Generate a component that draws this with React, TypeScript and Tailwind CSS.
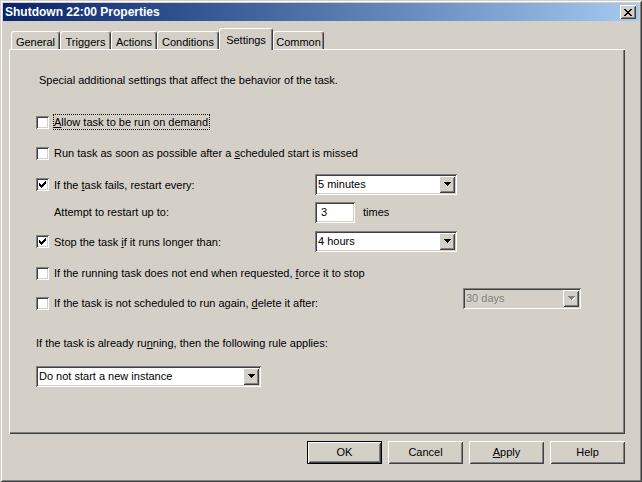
import React from 'react';

const raised =
  'shadow-[inset_1px_1px_0_#ffffff,inset_-1px_-1px_0_#404040,inset_2px_2px_0_#d4d0c8,inset_-2px_-2px_0_#808080]';
const sunken =
  'shadow-[inset_1px_1px_0_#808080,inset_-1px_-1px_0_#ffffff,inset_2px_2px_0_#404040,inset_-2px_-2px_0_#d4d0c8]';

const CheckBox: React.FC<{ checked?: boolean }> = ({ checked }) => (
  <div className={`relative w-[13px] h-[13px] bg-white shrink-0 ${sunken}`}>
    {checked && (
      <svg className="absolute left-0 top-0" width="13" height="13" viewBox="0 0 13 13" shapeRendering="crispEdges">
        <path
          d="M3 5h1v3H3z M4 6h1v3H4z M5 7h1v3H5z M6 6h1v3H6z M7 5h1v3H7z M8 4h1v3H8z M9 3h1v3H9z"
          fill="#000"
        />
      </svg>
    )}
  </div>
);

const Check: React.FC<{ checked?: boolean; focus?: boolean; children: React.ReactNode }> = ({
  checked,
  focus,
  children,
}) => (
  <div className="flex items-center">
    <CheckBox checked={checked} />
    <span
      className={`ml-[4px] h-[16px] leading-[14px] border pr-[1px] whitespace-nowrap ${
        focus ? 'border-dotted border-black' : 'border-transparent'
      }`}
    >
      {children}
    </span>
  </div>
);

const Arrow: React.FC<{ disabled?: boolean }> = ({ disabled }) => (
  <div className={`w-[16px] h-[17px] bg-[#d4d0c8] shrink-0 flex items-center justify-center ${raised}`}>
    <svg width="7" height="5" viewBox="0 0 7 5" shapeRendering="crispEdges">
      {disabled && <path d="M1 1h7v1H1z M2 2h5v1H2z M3 3h3v1H3z M4 4h1v1H4z" fill="#ffffff" />}
      <path d="M0 0h7v1H0z M1 1h5v1H1z M2 2h3v1H2z M3 3h1v1H3z" fill={disabled ? '#808080' : '#000'} />
    </svg>
  </div>
);

const Combo: React.FC<{ value: string; className: string; disabled?: boolean }> = ({
  value,
  className,
  disabled,
}) => (
  <div
    className={`h-[21px] p-[2px] flex shrink-0 ${sunken} ${className} ${
      disabled ? 'bg-[#d4d0c8] text-[#808080]' : 'bg-white'
    }`}
  >
    <span className="flex-1 pl-[1px] leading-[17px] whitespace-nowrap overflow-hidden">{value}</span>
    <Arrow disabled={disabled} />
  </div>
);

const Button: React.FC<{ children: React.ReactNode; primary?: boolean }> = ({ children, primary }) => (
  <div
    className={`w-[75px] h-[23px] bg-[#d4d0c8] flex items-center justify-center ${
      primary ? 'border border-black' : ''
    } ${raised}`}
  >
    {children}
  </div>
);

const tabs = [
  { name: 'General', cls: 'w-[49px]' },
  { name: 'Triggers', cls: 'w-[51px]' },
  { name: 'Actions', cls: 'w-[46px]' },
  { name: 'Conditions', cls: 'w-[62px]' },
  { name: 'Settings', cls: 'w-[54px]', active: true },
  { name: 'Common', cls: 'w-[51px]' },
];

export default function App() {
  return (
    <div
      className={`w-[642px] h-[482px] bg-[#d4d0c8] p-[3px] flex flex-col font-['Liberation_Sans',Arial,sans-serif] text-[11px] text-black shadow-[inset_1px_1px_0_#d4d0c8,inset_-1px_-1px_0_#404040,inset_2px_2px_0_#ffffff,inset_-2px_-2px_0_#808080]`}
    >
      {/* title bar */}
      <div className="h-[18px] flex items-center bg-linear-to-r from-[#0a246a] to-[#a6caf0] pl-[2px] pr-[3px]">
        <span className="flex-1 text-white font-bold text-[12px] whitespace-nowrap">Shutdown 22:00 Properties</span>
        <div className={`w-[16px] h-[14px] bg-[#d4d0c8] flex items-center justify-center ${raised}`}>
          <svg width="8" height="7" viewBox="0 0 8 7" shapeRendering="crispEdges">
            <path
              d="M0 0h2v1H0z M6 0h2v1H6z M1 1h2v1H1z M5 1h2v1H5z M2 2h4v1H2z M3 3h2v1H3z M2 4h4v1H2z M1 5h2v1H1z M5 5h2v1H5z M0 6h2v1H0z M6 6h2v1H6z"
              fill="#000"
            />
          </svg>
        </div>
      </div>

      {/* tabs */}
      <div className="mt-[7px] ml-[8px] h-[21px] flex items-end">
        {tabs.map((t) => (
          <div
            key={t.name}
            className={`${t.cls} bg-[#d4d0c8] rounded-t-[3px] border-t border-l border-white border-r border-r-[#404040] shadow-[inset_-1px_0_0_#808080] flex justify-center whitespace-nowrap ${
              t.active ? 'h-[22px] -mb-[1px] relative z-10 pt-[3px]' : 'h-[18px] pt-[2px]'
            }`}
          >
            {t.name}
          </div>
        ))}
      </div>

      {/* panel */}
      <div className="ml-[6px] w-[616px] h-[385px] flex flex-col pl-[27px] pt-[21px] shadow-[inset_1px_1px_0_#ffffff,inset_-1px_-1px_0_#404040,inset_-2px_-2px_0_#808080]">
        <div className="h-[20px] flex items-center ml-[3px]">
          Special additional settings that affect the behavior of the task.
        </div>

        <div className="mt-[22px] h-[20px] flex items-center">
          <Check focus>
            <u>A</u>llow task to be run on demand
          </Check>
        </div>

        <div className="mt-[11px] h-[20px] flex items-center">
          <Check>
            Run task as soon as possible after a <u>s</u>cheduled start is missed
          </Check>
        </div>

        <div className="mt-[11px] h-[21px] flex items-center">
          <div className="w-[279px]">
            <Check checked>
              If the <u>t</u>ask fails, restart every:
            </Check>
          </div>
          <Combo value="5 minutes" className="w-[142px]" />
        </div>

        <div className="mt-[7px] h-[21px] flex items-center">
          <div className="w-[279px] pl-[18px]">Attempt to restart up to:</div>
          <div className={`w-[40px] h-[21px] bg-white pl-[6px] pt-[3px] leading-[14px] ${sunken}`}>3</div>
          <span className="ml-[8px]">times</span>
        </div>

        <div className="mt-[8px] h-[21px] flex items-center">
          <div className="w-[279px]">
            <Check checked>
              Stop the task <u>i</u>f it runs longer than:
            </Check>
          </div>
          <Combo value="4 hours" className="w-[142px]" />
        </div>

        <div className="mt-[11px] h-[20px] flex items-center">
          <Check>
            If the running task does not end when requested, <u>f</u>orce it to stop
          </Check>
        </div>

        <div className="mt-[5px] h-[23px] flex">
          <div className="w-[427px] self-end">
            <Check>
              If the task is not scheduled to run again, <u>d</u>elete it after:
            </Check>
          </div>
          <Combo value="30 days" className="w-[118px] self-start" disabled />
        </div>

        <div className="mt-[22px] h-[20px] flex items-center">
          If the task is already ru<u>n</u>ning, then the following rule applies:
        </div>

        <Combo value="Do not start a new instance" className="mt-[13px] w-[225px]" />
      </div>

      {/* buttons */}
      <div className="ml-[6px] w-[616px] mt-[7px] flex justify-end gap-[6px]">
        <Button primary>OK</Button>
        <Button>Cancel</Button>
        <Button>
          <span>
            <u>A</u>pply
          </span>
        </Button>
        <Button>Help</Button>
      </div>
    </div>
  );
}
